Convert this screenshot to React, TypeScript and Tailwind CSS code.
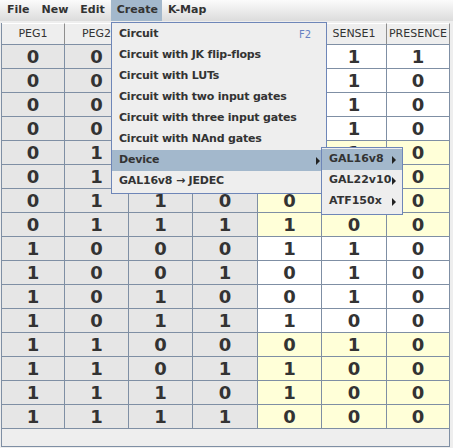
import React from "react";

const font = { fontFamily: '"DejaVu Sans", "Liberation Sans", sans-serif' };

const headers = ["PEG1", "PEG2", "PEG3", "PEG4", "SENSE0", "SENSE1", "PRESENCE"];
const colW = [
  "w-[63px]",
  "w-[64px]",
  "w-[64px]",
  "w-[65px]",
  "w-[64px]",
  "w-[65px]",
  "w-[63px]",
];

// inputs (4 bits) + outputs (3 bits)
const rows: number[][] = [
  [0, 0, 0, 0, 1, 1, 1],
  [0, 0, 0, 1, 0, 1, 0],
  [0, 0, 1, 0, 0, 1, 0],
  [0, 0, 1, 1, 1, 1, 0],
  [0, 1, 0, 0, 1, 1, 0],
  [0, 1, 0, 1, 0, 1, 0],
  [0, 1, 1, 0, 0, 1, 0],
  [0, 1, 1, 1, 1, 0, 0],
  [1, 0, 0, 0, 1, 1, 0],
  [1, 0, 0, 1, 0, 1, 0],
  [1, 0, 1, 0, 0, 1, 0],
  [1, 0, 1, 1, 1, 0, 0],
  [1, 1, 0, 0, 0, 1, 0],
  [1, 1, 0, 1, 1, 0, 0],
  [1, 1, 1, 0, 1, 0, 0],
  [1, 1, 1, 1, 0, 0, 0],
];

const Arrow = () => (
  <span className="inline-block w-0 h-0 border-y-[4px] border-y-transparent border-l-[4px] border-l-[#222]" />
);

const menuItems = [
  "Circuit",
  "Circuit with JK flip-flops",
  "Circuit with LUTs",
  "Circuit with two input gates",
  "Circuit with three input gates",
  "Circuit with NAnd gates",
];

export default function App() {
  return (
    <div
      className="relative w-[453px] h-[448px] overflow-hidden bg-[#eeeeee] text-[#333333]"
      style={font}
    >
      {/* menu bar */}
      <div className="flex h-[21px] pl-[1px] bg-gradient-to-b from-[#fbfbfb] to-[#dcdcdc] text-[11px] font-bold">
        {["File", "New", "Edit", "Create", "K-Map"].map((m) => (
          <div
            key={m}
            className={`flex items-center px-[6px] ${
              m === "Create" ? "bg-[#a3b8cc] pr-[4px]" : ""
            }`}
          >
            {m}
          </div>
        ))}
      </div>

      {/* table pane */}
      <div className="mt-[2px] ml-[1px] w-[449px] border-l border-[#7f8fa4]">
        <div className="flex h-[22px] border-b border-[#7f8fa4]">
          {headers.map((h, i) => (
            <div
              key={h}
              className={`${colW[i]} flex items-center justify-center border-r border-[#8e8e8e] border-t border-t-white bg-[#eeeeee] text-[11px] font-normal`}
            >
              {h}
            </div>
          ))}
        </div>
        {rows.map((r, ri) => {
          const yellow = r[1] === 1;
          return (
            <div key={ri} className="flex h-[24px] border-b border-[#7f8fa4]">
              {r.map((v, ci) => (
                <div
                  key={ci}
                  className={`${colW[ci]} flex items-center justify-center border-r border-[#7f8fa4] text-[18px] font-bold ${
                    ci < 4
                      ? "bg-[#e6e6e6]"
                      : yellow
                      ? "bg-[#ffffd8]"
                      : "bg-white"
                  }`}
                >
                  {v}
                </div>
              ))}
            </div>
          );
        })}
        <div className="h-[18px] w-[448px] border-r border-b border-[#7f8fa4] bg-[#eeeeee]" />
      </div>

      {/* Create menu */}
      <div className="absolute left-[111px] top-[22px] w-[216px] border border-[#6e86b8] bg-[#eeeeee] py-[1px] text-[11px] font-bold tracking-[-0.2px]">
        {menuItems.map((m, i) => (
          <div key={m} className="flex h-[21px] items-center justify-between pl-[7px] pr-[15px]">
            <span>{m}</span>
            {i === 0 && <span className="text-[10px] font-normal tracking-normal text-[#6681c2]">F2</span>}
          </div>
        ))}
        <div className="flex h-[21px] items-center justify-between pl-[7px] pr-[6px] bg-[#a3b8cc]">
          <span>Device</span>
          <Arrow />
        </div>
        <div className="flex h-[21px] items-center pl-[7px]">GAL16v8 → JEDEC</div>
      </div>

      {/* Device submenu */}
      <div className="absolute left-[321px] top-[147px] w-[82px] border border-[#6e86b8] bg-[#eeeeee] pt-[1px] pb-[2px] text-[11px] font-bold">
        {["GAL16v8", "GAL22v10", "ATF150x"].map((m, i) => (
          <div
            key={m}
            className={`flex h-[21px] items-center justify-between pl-[7px] pr-[6px] ${
              i === 0 ? "bg-[#a3b8cc]" : ""
            }`}
          >
            <span>{m}</span>
            <Arrow />
          </div>
        ))}
      </div>
    </div>
  );
}
